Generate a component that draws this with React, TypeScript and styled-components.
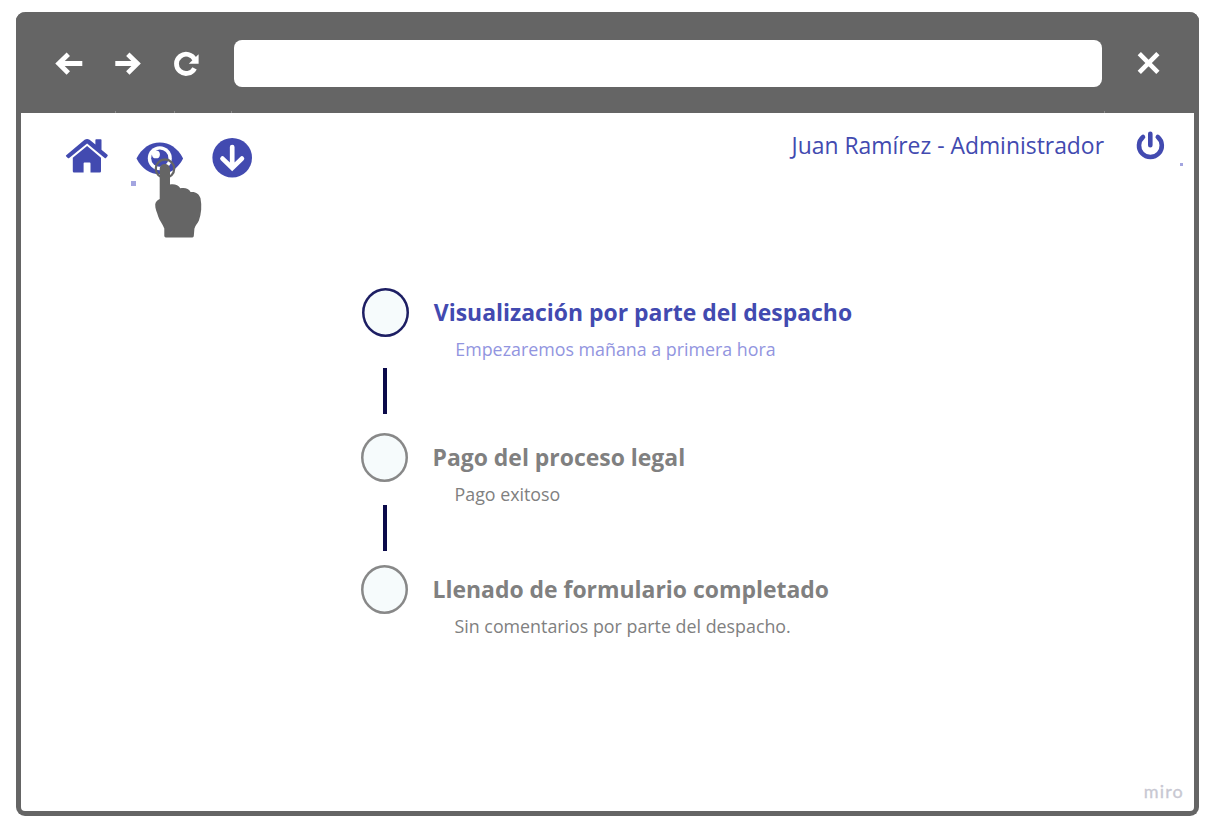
import React from "react";
import styled, { createGlobalStyle } from "styled-components";

const GlobalStyle = createGlobalStyle`
  * { box-sizing: border-box; }
  body { margin: 0; background: #fff; font-family: "Open Sans", "Noto Sans", sans-serif; }
  svg { display: block; flex: none; overflow: visible; }
`;

const gray = "#656565";
const indigo = "#424ab0";

const Page = styled.div`
  width: 1210px;
  height: 825px;
  padding: 12px 11px 9px 16px;
  overflow: hidden;
`;

const BrowserWindow = styled.div`
  position: relative;
  height: 804px;
  width: 1183px;
  display: flex;
  flex-direction: column;
  border: 5px solid ${gray};
  border-top: 0;
  border-radius: 9px;
  background: #fff;
`;

const BrowserBar = styled.header`
  height: 101px;
  flex: none;
  margin: 0 -5px;
  padding: 28px 38px 0 39px;
  display: flex;
  align-items: flex-start;
  background: ${gray};
  border-radius: 9px 9px 0 0;
`;

const NavIcons = styled.div`
  display: flex;
  gap: 31px;
  padding-top: 11px;
  width: 179px;
`;

const AddressBar = styled.div`
  width: 868px;
  height: 47px;
  border-radius: 8px;
  background: #fff;
  margin-right: 34px;
`;

const CloseSlot = styled.div`
  padding-top: 11px;
`;

const Toolbar = styled.div`
  display: flex;
  justify-content: space-between;
  align-items: flex-start;
  height: 127px;
  padding: 24px 30px 0 44px;
`;

const Tools = styled.div`
  display: flex;
  gap: 28px;
  align-items: flex-start;
`;

const ToolSlot = styled.div<{ $drop: number }>`
  padding-top: ${(p) => p.$drop}px;
`;

const Account = styled.div`
  display: flex;
  align-items: flex-start;
  gap: 32px;
`;

const UserName = styled.span`
  font-size: 22.9px;
  line-height: 32px;
  margin-top: -7px;
  color: ${indigo};
  white-space: nowrap;
`;

const PowerSlot = styled.div`
  margin-top: -6px;
`;

const Marker = styled.i<{ $x: number; $y: number; $size: number }>`
  position: absolute;
  left: ${(p) => p.$x}px;
  top: ${(p) => p.$y}px;
  width: ${(p) => p.$size}px;
  height: ${(p) => p.$size}px;
  background: #a3a5e0;
`;

const Tick = styled.i<{ $x: number }>`
  position: absolute;
  left: ${(p) => p.$x}px;
  top: 99px;
  width: 1px;
  height: 2px;
  background: #8c8c8c;
`;

const Pointer = styled.div`
  position: absolute;
  left: 133px;
  top: 145px;
`;

const Timeline = styled.main`
  display: flex;
  flex-direction: column;
  padding: 48px 0 0 340px;
`;

const Step = styled.section<{ $active?: boolean }>`
  display: flex;
  height: 49px;
  gap: 25px;
  padding-left: ${(p) => (p.$active ? 0.8 : 0)}px;
`;

const Dot = styled.div<{ $active?: boolean }>`
  width: 47px;
  height: 49px;
  flex: none;
  border-radius: 50%;
  box-shadow: inset 0 0 0 2.5px ${(p) => (p.$active ? "#1d1e63" : "#888")};
  background: #f6fbfc;
`;

const StepText = styled.div`
  display: flex;
  flex-direction: column;
  white-space: nowrap;
`;

const Title = styled.h2<{ $active?: boolean }>`
  margin: 8px 0 0 ${(p) => (p.$active ? 0 : -0.5)}px;
  font-size: 22.93px;
  line-height: 32px;
  font-weight: 700;
  color: ${(p) => (p.$active ? indigo : "#808080")};
`;

const Note = styled.p<{ $active?: boolean }>`
  margin: 9px 0 0 21.5px;
  font-size: 17.83px;
  line-height: 24px;
  color: ${(p) => (p.$active ? "#9295e0" : "#808080")};
`;

const Connector = styled.div<{ $before: number; $after: number }>`
  width: 4px;
  height: 46px;
  margin: ${(p) => p.$before}px 0 ${(p) => p.$after}px 22px;
  background: #0b0a4a;
`;

const Brand = styled.span`
  position: absolute;
  right: 10px;
  bottom: 8px;
  font-family: Lato, sans-serif;
  font-size: 18px;
  line-height: 24px;
  font-weight: 400;
  -webkit-text-stroke: 0.3px #c8c8d2;
  letter-spacing: 1.2px;
  color: #c8c8d2;
`;

const BackIcon = () => (
  <svg width="28" height="25" viewBox="55 51 28 25" fill="none" stroke="#fff" strokeWidth="4.8">
    <path d="M82.3 63.5H58M68.3 54.2L58.7 63.5L68.3 73" />
  </svg>
);
const ForwardIcon = () => (
  <svg width="28" height="25" viewBox="114 51 28 25" fill="none" stroke="#fff" strokeWidth="4.8">
    <path d="M115.3 63.5H138M127.8 54.2L137.4 63.5L127.8 73" />
  </svg>
);
const ReloadIcon = () => (
  <svg width="26" height="25" viewBox="173 51 26 25">
    <path d="M194.6 68.3A9.6 9.6 0 1 1 194.8 59.8" fill="none" stroke="#fff" strokeWidth="4.8" />
    <path d="M198.6 54.2V63.8H188.8Z" fill="#fff" />
  </svg>
);
const CloseIcon = () => (
  <svg width="25" height="25" viewBox="1136 51 25 25">
    <path d="M1139.3 53.7L1157.9 72.3M1157.9 53.7L1139.3 72.3" stroke="#fff" strokeWidth="4.6" />
  </svg>
);
const HomeIcon = () => (
  <svg width="44" height="37" viewBox="65.2 136.8 44 37" fill={indigo}>
    <path d="M66.2 156.1Q65.8 155.5 66.4 155L84.8 139.6Q87.3 138 89.8 139.6L95.6 144.4V139.8Q95.6 139.1 96.3 139.1H101Q101.7 139.1 101.7 139.8V149.5L107.7 154.6Q108.2 155.2 107.8 155.8L106.2 157.7Q105.5 158.2 104.9 157.7L87.3 143.2L69.4 157.9Q68.6 158.4 68 157.8Z" />
    <path d="M87.3 145.9L101.2 157.5V171Q101.2 172.2 100 172.2H90.7V163.2Q90.7 162.4 89.9 162.4H84.6Q83.8 162.4 83.8 163.2V172.2H74.2Q73 172.2 73 171V157.5Z" />
  </svg>
);
const EyeIcon = () => (
  <svg width="48" height="34" viewBox="137.2 140.8 48 34">
    <path d="M136.7 158.2C142 148 150.4 142.3 160 142.3S178 148 183.3 158.2C178 168.5 169.6 174 160 174S142 168.5 136.7 158.2Z" fill={indigo} />
    <circle cx="160" cy="158" r="12" fill="#fff" />
    <circle cx="160" cy="158" r="8.6" fill={indigo} />
    <circle cx="156.2" cy="154.2" r="3.9" fill="#fff" />
    <path d="M151.9 153.5L156 149.5L157 152L153 156Z" fill="#fff" />
  </svg>
);
const DownloadIcon = () => (
  <svg width="40" height="40" viewBox="213 138 40 40">
    <circle cx="232.2" cy="157.7" r="19.8" fill={indigo} />
    <path d="M232.2 147V167M222.5 158.6L232.2 168L241.9 158.6" fill="none" stroke="#fff" strokeWidth="4.7" strokeLinecap="round" />
  </svg>
);
const PowerIcon = () => (
  <svg width="28" height="30" viewBox="1136 131 28 30" fill="none" stroke={indigo} strokeWidth="4.6" strokeLinecap="round">
    <path d="M1150.3 133.7V145.3M1143 137A11.4 11.4 0 1 0 1157.8 137" />
  </svg>
);
const HandIcon = () => (
  <svg width="50" height="82" viewBox="154 157 50 82">
    <circle cx="165" cy="168.7" r="9.2" fill="none" stroke={gray} strokeWidth="2.3" />
    <path fill={gray} d="M159.7 199V169.3C159.7 162.2 170 162.2 170 169.3V184.5C174 183.8 178.5 184.6 180.3 188.3C184.5 187.2 189 188.4 190.6 192C195.6 191.4 199.2 193.7 200.5 198.3C202 206 201.4 214 198.9 220.6C197.5 223.8 195.2 225.5 194.4 228.7L193.8 236Q193.7 237.4 192.4 237.4H165.8Q164.4 237.4 164.3 236V228.5C162.6 223.6 159.5 221 158.2 216.5C157 212 155 208.8 155.2 204.5C155.4 202.2 157.3 199.9 159.7 199Z" />
  </svg>
);

const steps = [
  { title: "Visualización por parte del despacho", note: "Empezaremos mañana a primera hora", active: true, before: 31, after: 19 },
  { title: "Pago del proceso legal", note: "Pago exitoso", active: false, before: 23, after: 14 },
  { title: "Llenado de formulario completado", note: "Sin comentarios por parte del despacho.", active: false, before: 0, after: 0 },
];

export default function App() {
  return (
    <Page>
      <GlobalStyle />
      <BrowserWindow>
        <BrowserBar>
          <NavIcons>
            <BackIcon />
            <ForwardIcon />
            <ReloadIcon />
          </NavIcons>
          <AddressBar />
          <CloseSlot>
            <CloseIcon />
          </CloseSlot>
        </BrowserBar>
        <Toolbar>
          <Tools>
            <ToolSlot $drop={0}>
              <HomeIcon />
            </ToolSlot>
            <ToolSlot $drop={4}>
              <EyeIcon />
            </ToolSlot>
            <ToolSlot $drop={1}>
              <DownloadIcon />
            </ToolSlot>
          </Tools>
          <Account>
            <UserName>Juan Ramírez - Administrador</UserName>
            <PowerSlot>
              <PowerIcon />
            </PowerSlot>
          </Account>
        </Toolbar>
        <Timeline>
          {steps.map((s, i) => (
            <React.Fragment key={s.title}>
              <Step $active={s.active}>
                <Dot $active={s.active} />
                <StepText>
                  <Title $active={s.active}>{s.title}</Title>
                  <Note $active={s.active}>{s.note}</Note>
                </StepText>
              </Step>
              {i < steps.length - 1 && <Connector $before={s.before} $after={s.after} />}
            </React.Fragment>
          ))}
        </Timeline>
        {[94, 153, 210, 1083].map((x) => (
          <Tick key={x} $x={x} />
        ))}
        <Marker $x={110} $y={169} $size={5} />
        <Marker $x={1159} $y={151} $size={3} />
        <Pointer>
          <HandIcon />
        </Pointer>
        <Brand>miro</Brand>
      </BrowserWindow>
    </Page>
  );
}
